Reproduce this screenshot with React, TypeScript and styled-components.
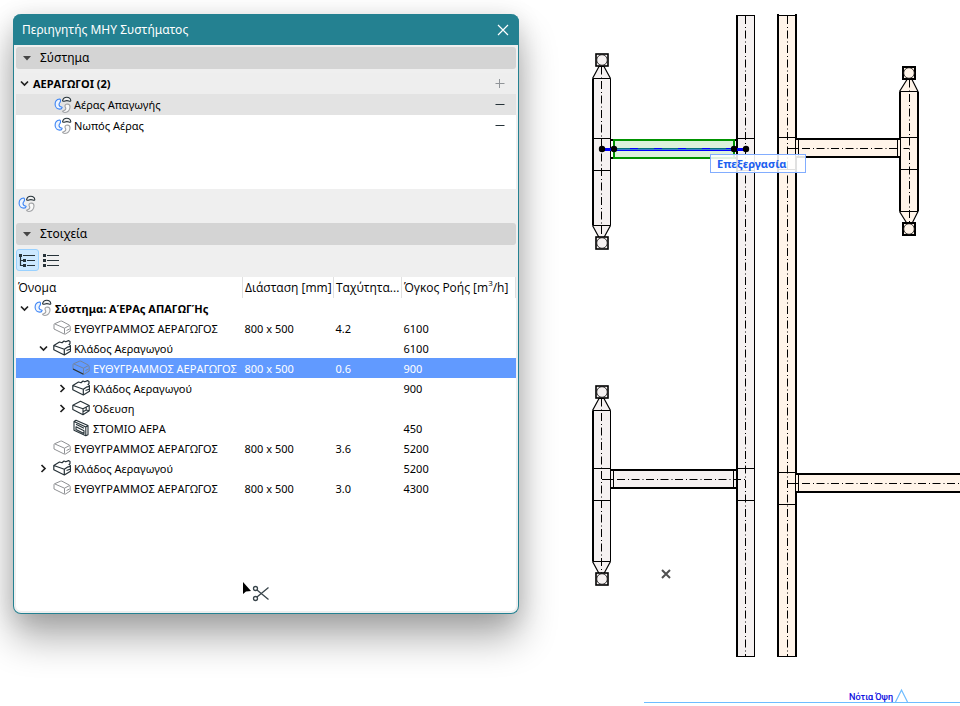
import React from "react";
import styled, { createGlobalStyle, css } from "styled-components";

const TEAL = "#248191";
const INK = "#263238";

const GlobalStyle = createGlobalStyle`
  * { box-sizing: border-box; }
  body {
    margin: 0;
    background: #ffffff;
    color: #000000;
    font-family: "Noto Sans", "Open Sans", sans-serif;
    font-size: 11px;
    line-height: 20px;
  }
  button { font: inherit; color: inherit; }
  svg { flex: none; }
`;

const Workspace = styled.main`
  display: grid;
  grid-template-columns: 506fr 441fr;
  min-height: 100vh;
  padding-left: 13px;
  overflow: hidden;
`;

const Palette = styled.section`
  position: relative;
  z-index: 1;
  display: flex;
  flex-direction: column;
  min-width: 0;
  margin: 14px 0 92px;
  border: 1px solid ${TEAL};
  border-top: 0;
  border-radius: 8px;
  background: #efefef;
  box-shadow: 0 24px 38px rgba(0, 0, 0, 0.32), 0 4px 24px rgba(0, 0, 0, 0.13);
`;

const TitleBar = styled.header`
  display: flex;
  align-items: center;
  justify-content: space-between;
  height: 31px;
  margin: 0 -1px;
  padding: 0 9px;
  border-radius: 8px 8px 0 0;
  background: ${TEAL};
  color: #ffffff;
`;

const Title = styled.h1`
  margin: 0;
  font-size: 12px;
  font-weight: 400;
`;

const IconButton = styled.button`
  display: flex;
  align-items: center;
  justify-content: center;
  width: 14px;
  height: 14px;
  padding: 0;
  border: 0;
  background: none;
`;

const PaletteBody = styled.div`
  display: flex;
  flex: 1;
  flex-direction: column;
  padding: 2px;
`;

const SectionBar = styled.button`
  display: flex;
  align-items: center;
  gap: 9px;
  flex: none;
  height: 22px;
  padding: 0 7px;
  border: 0;
  border-radius: 3px;
  background: #d4d4d4;
  font-size: 12px;
  text-align: left;
`;

const SystemList = styled.ul`
  flex: none;
  height: 116px;
  margin: 4px 0 0;
  padding: 0;
  background: #ffffff;
  list-style: none;
`;

const SystemRow = styled.li<{ $kind?: "group" | "active" }>`
  display: flex;
  align-items: center;
  height: 21px;
  padding: 0 9px 0 38px;
  gap: 2px;
  background: #ffffff;
  ${(p) => p.$kind === "active" && css`background: #e3e3e3;`}
  ${(p) =>
    p.$kind === "group" &&
    css`
      padding-left: 1px;
      background: #eeeeee;
      font-weight: 700;
    `}
`;

const SystemName = styled.span`
  flex: 1;
`;

const IconStrip = styled.div`
  display: flex;
  align-items: center;
  flex: none;
  height: 34px;
  padding: 0 1px 4px;
`;

const StripButton = styled(IconButton)`
  width: 20px;
  height: 20px;
`;

const ViewModes = styled.div`
  display: flex;
  flex: none;
  padding: 4px 0 6px;
`;

const ViewButton = styled.button`
  display: flex;
  align-items: center;
  justify-content: center;
  width: 23px;
  height: 22px;
  padding: 0;
  border: 1px solid transparent;
  border-radius: 3px;
  background: none;
  &[aria-pressed="true"] {
    border-color: #99d1ff;
    background: #cce8ff;
  }
`;

const TablePane = styled.div`
  position: relative;
  flex: 1;
  border-radius: 0 0 5px 5px;
  background: #ffffff;
`;

const ElementsTable = styled.table`
  width: 100%;
  border-collapse: collapse;
  table-layout: fixed;
`;

const Column = styled.col<{ $width?: number }>`
  width: ${(p) => (p.$width ? `${p.$width}px` : "auto")};
`;

const HeadCell = styled.th`
  height: 21px;
  padding: 0 0 0 2px;
  border-right: 1px solid #e0e0e0;
  font-family: "Open Sans", "Noto Sans", sans-serif;
  font-size: 12px;
  font-weight: 400;
  text-align: left;
  white-space: nowrap;
  overflow: hidden;
`;

const Sup = styled.sup`
  font-size: 8px;
  line-height: 0;
  vertical-align: 6px;
`;

const ElementRow = styled.tr<{ $selected?: boolean; $strong?: boolean }>`
  height: 20px;
  font-weight: ${(p) => (p.$strong ? 700 : 400)};
  ${(p) =>
    p.$selected &&
    css`
      background: #619aff;
      color: #ffffff;
    `}
`;

const Cell = styled.td`
  padding: 2px 2px 0;
  line-height: 18px;
  white-space: nowrap;
`;

const NameCell = styled.td<{ $level: number }>`
  padding: 0 0 0 ${(p) => 1 + p.$level * 19}px;
  white-space: nowrap;
`;

const NameLine = styled.div`
  display: flex;
  align-items: center;
  gap: 3px;
  height: 20px;
`;

const NameText = styled.span`
  padding-top: 2px;
  line-height: 18px;
`;

const ToggleSlot = styled.span`
  display: flex;
  flex: none;
  width: 14px;
`;

const CutCursor = styled.span`
  position: absolute;
  right: 244px;
  bottom: 7px;
  display: flex;
`;

const Plan = styled.div`
  position: relative;
  min-width: 0;
`;

const PlanDrawing = styled.svg`
  display: block;
  width: 100%;
  height: 100%;
`;

const EditTag = styled.div`
  position: absolute;
  left: 191px;
  top: 154px;
  width: 96px;
  height: 19px;
  padding-left: 6px;
  border: 1px solid #82adff;
  background: rgba(255, 255, 255, 0.88);
  color: #2060f0;
  font-weight: 700;
  line-height: 18px;
`;

const SystemIcon = () => (
  <svg width="18" height="18" viewBox="0 0 18 18" fill="none" aria-hidden="true">
    <path d="M5.600 3C3 3.300 1.100 5.500 1.100 8.200c0 3 2.300 4.800 4.700 4.900 1.300 0 2.200-.8 2.300-1.700C6.500 11 5.100 10.100 5 8.500c0-1.400 1.400-2 1.500-3.400C6.600 4 6.400 3 5.600 3z" stroke="#3d85f5" strokeWidth="1.100" fill="#eef5ff" />
    <path d="M13.300 8c2 .2 2.800 1.400 2.700 3-.2 3.100-2.200 5.300-5.100 5.500-1.200 0-2.200-.5-2.400-1.300 1.500-.3 3.200-1.200 3.300-2.700 0-1.100-.8-1.500-.8-2.500 0-1.200 1.100-2 2.300-2z" stroke="#a0a2a5" strokeWidth="1.100" fill="#fafafa" />
    <path d="M8.600 4.700C9 2.400 10.800 1.200 12.800 1.200c2.200 0 3.700 1.500 4 3.300 0 .9-1 1-1.900.5-1.300-.5-2.700-.5-3.900 0-1.100.5-2.400.3-2.400-.3z" stroke={INK} strokeWidth="1.100" fill="#f0f0f0" />
  </svg>
);

const StraightIcon = ({ selected }: { selected?: boolean }) => (
  <svg width="18" height="16" viewBox="0 0 18 16" fill="none" strokeLinejoin="round" aria-hidden="true">
    <g stroke={selected ? "#74859f" : "#8f9194"}>
      <path d="M1.500 3.800 7.500 1.200Q8.300.9 9 1.200L16.500 5.200M1.500 3.800 11.500 8.200 16 5.800Q17.200 5.300 17.200 6.500V11L12.500 14Q11.500 14.500 11.500 13.500V8.200M1 4.200V9L11.500 14.200M13.500 10.500 16.500 9" />
    </g>
    {selected && <path d="M1 9l10.500 5.200" stroke={INK} strokeWidth="1.200" />}
  </svg>
);

const RouteIcon = () => (
  <svg width="18" height="16" viewBox="0 0 18 16" fill="none" stroke={INK} strokeWidth="1.100" strokeLinejoin="round" aria-hidden="true">
    <path d="M.8 5.300 8.500 1.200 17.200 5.500 11 8.700zM.8 5.300v4.200L11 14.800V8.700M17.200 5.500v5.300L11 14.800M11 11.700l3.200-1.700 3 .8M14.200 10V7.500" />
  </svg>
);

const BranchIcon = () => (
  <svg width="18" height="16" viewBox="0 0 18 16" fill="none" stroke={INK} strokeWidth="1.200" strokeLinejoin="round" aria-hidden="true">
    <path d="M.8 5.500 6.500 2l2.500.8L11 1l1.800.8 2.700-1.200 1.500 1v2l-1 .8 1.500 1.200v5.600L11.300 15 .8 9.800zM.8 5.500l10.500 3.700 3-2 3.200-.8M11.300 9.200V15M13.500 10.500l4-1.500" />
  </svg>
);

const TerminalIcon = () => (
  <svg width="18" height="18" viewBox="0 0 18 18" fill="none" stroke={INK} strokeWidth="1.100" strokeLinejoin="round" aria-hidden="true">
    <path d="M2 2.500 4 1.200 16 6.500v9.300L13.800 16.800 2 11.200zM2 2.500 13.800 8v8.800M13.800 8 16 6.500M4 5.200l8 4M4 7.800l8 4v2.700L4 10.500z" />
  </svg>
);

const Chevron = ({ open }: { open?: boolean }) => (
  <svg width="9" height="9" viewBox="0 0 9 9" fill="none" stroke="#202020" strokeWidth="1.700" aria-hidden="true">
    <path d={open ? "M1 2.500 4.500 6 8 2.500" : "M2.500 1 6 4.500 2.500 8"} />
  </svg>
);

const SectionArrow = () => (
  <svg width="8" height="5" viewBox="0 0 8 5" aria-hidden="true">
    <path d="M0 0h8L4 4.500z" fill="#454545" />
  </svg>
);

const PlusMinus = ({ plus }: { plus?: boolean }) => (
  <svg width="10" height="10" viewBox="0 0 10 10" stroke={plus ? "#909498" : INK} aria-hidden="true">
    <path d={plus ? "M.5 4.500h9M4.500 0v9" : "M.5 4.500h9"} />
  </svg>
);

type Kind = "system" | "straight" | "branch" | "route" | "terminal";

type Item = {
  name: string;
  kind: Kind;
  level: number;
  open?: boolean;
  size?: string;
  speed?: string;
  flow?: string;
  selected?: boolean;
};

const DUCT = "ΕΥΘΥΓΡΑΜΜΟΣ ΑΕΡΑΓΩΓΟΣ";
const BRANCH = "Κλάδος Αεραγωγού";

const items: Item[] = [
  { name: "Σύστημα: ΑΈΡΑς ΑΠΑΓΩΓΉς", kind: "system", level: 0, open: true },
  { name: DUCT, kind: "straight", level: 1, size: "800 x 500", speed: "4.2", flow: "6100" },
  { name: BRANCH, kind: "branch", level: 1, open: true, flow: "6100" },
  { name: DUCT, kind: "straight", level: 2, size: "800 x 500", speed: "0.6", flow: "900", selected: true },
  { name: BRANCH, kind: "branch", level: 2, open: false, flow: "900" },
  { name: "Όδευση", kind: "route", level: 2, open: false },
  { name: "ΣΤΟΜΙΟ ΑΕΡΑ", kind: "terminal", level: 2, flow: "450" },
  { name: DUCT, kind: "straight", level: 1, size: "800 x 500", speed: "3.6", flow: "5200" },
  { name: BRANCH, kind: "branch", level: 1, open: false, flow: "5200" },
  { name: DUCT, kind: "straight", level: 1, size: "800 x 500", speed: "3.0", flow: "4300" },
];

const ElementIcon = ({ item }: { item: Item }) => {
  if (item.kind === "system") return <SystemIcon />;
  if (item.kind === "branch") return <BranchIcon />;
  if (item.kind === "route") return <RouteIcon />;
  if (item.kind === "terminal") return <TerminalIcon />;
  return <StraightIcon selected={item.selected} />;
};

const GREY = "#f5f1f1";
const CREAM = "#fff4e9";
const AXIS = "8 3 1 2.500";

type RiserProps = { x: number; top: number; bottom: number; cross: number; fill: string; heavy?: boolean };

/* Vertical duct with a tapered square terminal at each end. */
const Riser = ({ x, top, bottom, cross, fill, heavy }: RiserProps) => {
  const right = heavy ? x + 10 : x + 9.5;
  const axis = heavy ? x + 1.5 : x + 0.5;
  return (
    <g fill={fill} stroke="#000">
      <rect x={x - 8} y={top} width={right - x + 8} height={bottom - top} stroke="none" />
      <path d={`M${x - 8.5} ${top}L${axis - 2.5} ${top - 12}h5L${right} ${top}`} strokeWidth="1.200" />
      <path d={`M${x - 8.5} ${bottom}L${axis - 2.5} ${bottom + 12}h5L${right} ${bottom}`} strokeWidth="1.200" />
      <path d={`M${x - 8} ${top}V${bottom}`} strokeWidth="2" />
      <path d={`M${right} ${top}V${bottom}`} strokeWidth={heavy ? 2 : 1} />
      <path d={`M${x - 8} ${top}H${right}M${x - 8} ${bottom}H${right}M${x - 8} ${cross}H${right}M${x - 8} ${cross + 32}H${right}`} />
      <path d={`M${axis} ${top - 12}V${bottom + 12}`} strokeDasharray={AXIS} />
      {[top - 24.5, bottom + 11.5].map((y) => (
        <g key={y}>
          <rect x={x - 5} y={y} width="12" height="12" strokeWidth={heavy ? 2 : 1.6} />
          <circle cx={x + 1} cy={y + 6} r="5.300" strokeWidth=".8" />
        </g>
      ))}
    </g>
  );
};

type MainProps = { x: number; crosses: number[]; fill: string; heavy?: boolean };

const MainDuct = ({ x, crosses, fill, heavy }: MainProps) => {
  const right = heavy ? x + 18 : x + 17.5;
  const axis = heavy ? x + 9.5 : x + 8.5;
  return (
    <g fill="none" stroke="#000">
      <rect x={x} y="15" width={right - x} height="641" fill={fill} stroke="none" />
      <path d={`M${x} ${heavy ? 14 : 15}V657`} strokeWidth="2" />
      <path d={`M${right} ${heavy ? 14 : 15}V657`} strokeWidth={heavy ? 2 : 1} />
      <path d={`M${x - 1} 15.500H${right}M${x - 1} 656.500H${right}`} />
      {crosses.map((y) => (
        <path key={y} d={`M${x} ${y}H${right}M${x} ${y + 32}H${right}`} />
      ))}
      <path d={`M${axis} 16V656`} strokeDasharray={AXIS} />
    </g>
  );
};

type BranchProps = { x1: number; x2: number; y: number; fill: string; a: number; b: number };

const BranchDuct = ({ x1, x2, y, fill, a, b }: BranchProps) => (
  <g fill="none" stroke="#000">
    <rect x={x1} y={y} width={x2 - x1} height="18" fill={fill} stroke="none" />
    <path d={`M${x1} ${y}H${x2}M${x1} ${y + 18}H${x2}`} strokeWidth="2" />
    <path d={`M${x1 + 2.5} ${y}v18M${x2 - 2.5} ${y}v18`} />
    <path d={`M${a} ${y + 9.5}h12`} />
    <path d={`M${a + 15} ${y + 9.5}H${b}`} strokeDasharray={AXIS} />
  </g>
);

export default function App() {
  return (
    <>
      <GlobalStyle />
      <Workspace>
        <Palette aria-label="Περιηγητής ΜΗΥ Συστήματος">
          <TitleBar>
            <Title>Περιηγητής ΜΗΥ Συστήματος</Title>
            <IconButton aria-label="Κλείσιμο">
              <svg width="12" height="12" viewBox="0 0 12 12" stroke="#fff" strokeWidth="1.200" aria-hidden="true">
                <path d="M1 1l10 10M11 1 1 11" />
              </svg>
            </IconButton>
          </TitleBar>
          <PaletteBody>
            <SectionBar aria-expanded="true">
              <SectionArrow />
              Σύστημα
            </SectionBar>
            <SystemList>
              <SystemRow $kind="group">
                <IconButton aria-label="Σύμπτυξη"><Chevron open /></IconButton>
                <SystemName>ΑΕΡΑΓΩΓΟΙ (2)</SystemName>
                <IconButton aria-label="Προσθήκη"><PlusMinus plus /></IconButton>
              </SystemRow>
              <SystemRow $kind="active">
                <SystemIcon />
                <SystemName>Αέρας Απαγωγής</SystemName>
                <IconButton aria-label="Αφαίρεση"><PlusMinus /></IconButton>
              </SystemRow>
              <SystemRow>
                <SystemIcon />
                <SystemName>Νωπός Αέρας</SystemName>
                <IconButton aria-label="Αφαίρεση"><PlusMinus /></IconButton>
              </SystemRow>
            </SystemList>
            <IconStrip>
              <StripButton aria-label="Σύστημα"><SystemIcon /></StripButton>
            </IconStrip>
            <SectionBar aria-expanded="true">
              <SectionArrow />
              Στοιχεία
            </SectionBar>
            <ViewModes>
              <ViewButton aria-label="Δέντρο" aria-pressed="true">
                <svg width="17" height="13" viewBox="0 0 17 13" stroke={INK} fill={INK} aria-hidden="true">
                  <path d="M4 1.500h12M8 6.500h8M8 11.500h8M1.500 2v9.500H5M1.500 6.500H5" fill="none" strokeWidth="1.200" />
                  <path d="M0 0h3v3H0zM4 5h3v3H4zM4 10h3v3H4z" stroke="none" />
                </svg>
              </ViewButton>
              <ViewButton aria-label="Λίστα" aria-pressed="false">
                <svg width="17" height="13" viewBox="0 0 17 13" aria-hidden="true">
                  <path d="M5 1.500h12M5 6.500h12M5 11.500h12" stroke={INK} strokeWidth="1.200" />
                  <path d="M1 0h3v3H1zM1 5h3v3H1zM1 10h3v3H1z" fill={INK} />
                </svg>
              </ViewButton>
            </ViewModes>
            <TablePane>
              <ElementsTable>
                <colgroup>
                  <Column />
                  <Column $width={91} />
                  <Column $width={68} />
                  <Column $width={114} />
                </colgroup>
                <thead>
                  <tr>
                    <HeadCell scope="col">Όνομα</HeadCell>
                    <HeadCell scope="col">Διάσταση [mm]</HeadCell>
                    <HeadCell scope="col">Ταχύτητα...</HeadCell>
                    <HeadCell scope="col">Όγκος Ροής [m<Sup>3</Sup>/h]</HeadCell>
                  </tr>
                </thead>
                <tbody>
                  {items.map((item, i) => (
                    <ElementRow key={i} $selected={item.selected} $strong={item.kind === "system"}>
                      <NameCell $level={item.level}>
                        <NameLine>
                          <ToggleSlot>
                            {item.open !== undefined && (
                              <IconButton aria-label={item.name} aria-expanded={item.open}>
                                <Chevron open={item.open} />
                              </IconButton>
                            )}
                          </ToggleSlot>
                          <ElementIcon item={item} />
                          <NameText>{item.name}</NameText>
                        </NameLine>
                      </NameCell>
                      <Cell>{item.size}</Cell>
                      <Cell>{item.speed}</Cell>
                      <Cell>{item.flow}</Cell>
                    </ElementRow>
                  ))}
                </tbody>
              </ElementsTable>
              <CutCursor>
                <svg width="30" height="22" viewBox="0 0 30 22" fill="none" aria-hidden="true">
                  <path d="M1 0v12l3-2.500 5-.5z" fill="#000" />
                  <g stroke="#39454b" strokeWidth="1.300">
                    <circle cx="13.500" cy="6.500" r="2" />
                    <circle cx="13.500" cy="16.500" r="2" />
                    <path d="M15 8l11.500 9.500M15 15 26.500 5.500" />
                  </g>
                </svg>
              </CutCursor>
            </TablePane>
          </PaletteBody>
        </Palette>

        <Plan>
          <PlanDrawing role="img" aria-label="Κάτοψη αεραγωγών">
            <g transform="translate(-519 0)">
              <MainDuct x={737} crosses={[138.5, 468.5]} fill={GREY} />
              <MainDuct x={778} crosses={[137.5, 472.5]} fill={CREAM} heavy />
              <Riser x={601} top={78.5} bottom={225.5} cross={138.5} fill={GREY} />
              <Riser x={601} top={410.5} bottom={561.5} cross={468.5} fill={GREY} />
              <Riser x={908} top={91.5} bottom={211.5} cross={137.5} fill={CREAM} heavy />
              <BranchDuct x1={611} x2={736} y={470} fill={GREY} a={602} b={746} />
              <BranchDuct x1={796} x2={900} y={139} fill={CREAM} a={787} b={909} />
              <BranchDuct x1={796} x2={1400} y={474} fill={CREAM} a={787} b={1400} />

              <path d="M611 140h126M611 158h126" stroke="#000" strokeWidth="2" />
              <rect x="614" y="140" width="120" height="18" fill="#dcf2dc" stroke="#009300" strokeWidth="2" />
              <path d="M602 149.500h144" stroke="#0000ff" strokeWidth="3" />
              <path d="M614 148.500h120" stroke="#087080" strokeDasharray="16 8" />
              <path d="M614 149.500h120" stroke="#3c80c8" />
              <g fill="#000">
                <circle cx="602" cy="149" r="3.200" />
                <circle cx="614" cy="149" r="3.200" />
                <circle cx="734" cy="149" r="3.200" />
                <circle cx="746" cy="149" r="3.200" />
              </g>

              <path d="M662 570l8 8M670 570l-8 8" stroke="#505050" strokeWidth="2" />
              <path d="M644 702.500H1400M895.500 702l6-12 6 12" fill="none" stroke="#6ebcff" strokeWidth="1.200" />
              <text x="849" y="700" fontFamily="Roboto, Open Sans, sans-serif" fontSize="9" fill="#0000e0" stroke="#0000e0" strokeWidth=".2">
                Νότια Όψη
              </text>
            </g>
          </PlanDrawing>
          <EditTag>Επεξεργασία</EditTag>
        </Plan>
      </Workspace>
    </>
  );
}
